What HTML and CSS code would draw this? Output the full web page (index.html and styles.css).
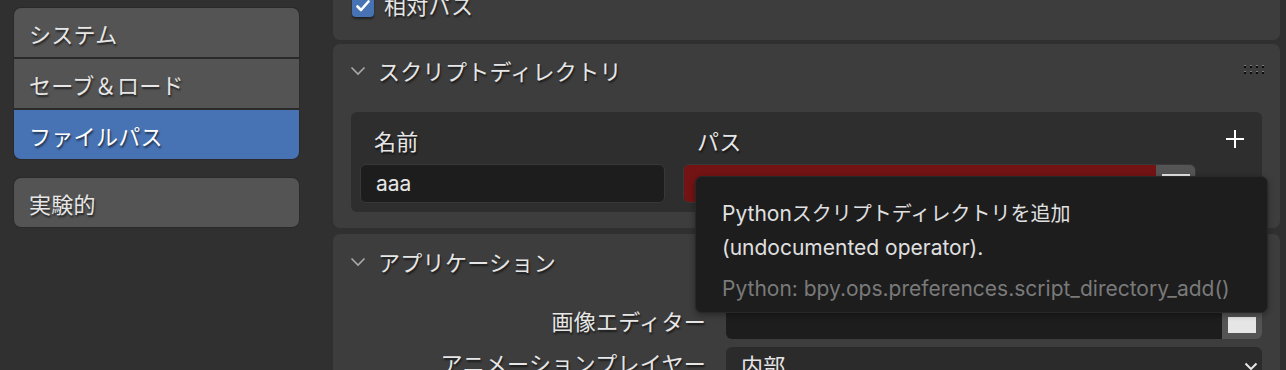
FILE: index.html
```html
<!DOCTYPE html>
<html lang="ja">
<head>
  <meta charset="UTF-8" />
  <title>プリファレンス - ファイルパス</title>
  <link rel="stylesheet" href="styles.css">
</head>
<body>
  <div class="app">
    <aside class="sidebar">
      <div class="tabs">
        <div class="tab">システム</div>
        <div class="tab">セーブ＆ロード</div>
        <div class="tab active">ファイルパス</div>
      </div>
      <div class="tabs">
        <div class="tab">実験的</div>
      </div>
    </aside>

    <main class="content">
      <section class="panel panel-top">
        <label class="check-row">
          <span class="checkbox">
            <svg width="14" height="12" viewBox="0 0 14 12"><path d="M1.5 6.5 L5 10 L12.5 1.5" fill="none" stroke="#fff" stroke-width="2.6" stroke-linecap="round" stroke-linejoin="round"/></svg>
          </span>
          <span class="jp">相対パス</span>
        </label>
      </section>

      <section class="panel panel-scripts">
        <div class="panel-header">
          <svg class="chevron" width="16" height="10" viewBox="0 0 16 10"><path d="M1.5 1.5 L8 8 L14.5 1.5" fill="none" stroke="#aaa" stroke-width="1.6"/></svg>
          <span class="jp">スクリプトディレクトリ</span>
          <svg class="grip" width="22" height="10" viewBox="0 0 22 10">
            <g fill="#7a7a7a"><rect x="0" y="0" width="2" height="1"/><rect x="6" y="0" width="2" height="1"/><rect x="12" y="0" width="2" height="1"/><rect x="18" y="0" width="2" height="1"/><rect x="0" y="6" width="2" height="1"/><rect x="6" y="6" width="2" height="1"/><rect x="12" y="6" width="2" height="1"/><rect x="18" y="6" width="2" height="1"/></g>
            <g fill="#0c0c0c"><rect x="0" y="1" width="2" height="2"/><rect x="6" y="1" width="2" height="2"/><rect x="12" y="1" width="2" height="2"/><rect x="18" y="1" width="2" height="2"/><rect x="0" y="7" width="2" height="2"/><rect x="6" y="7" width="2" height="2"/><rect x="12" y="7" width="2" height="2"/><rect x="18" y="7" width="2" height="2"/></g>
          </svg>
        </div>
        <div class="listbox">
          <div class="col-label jp">名前</div>
          <div class="col-label jp">パス</div>
          <div class="add">
            <svg width="18" height="18" viewBox="0 0 18 18"><path d="M9 0 V18 M0 9 H18" stroke="#fff" stroke-width="2"/></svg>
          </div>
          <div class="field">aaa</div>
          <div class="path-field">
            <div class="path-value"></div>
            <div class="browse"><span class="browse-icon"></span></div>
          </div>
          <div></div>
        </div>
      </section>

      <section class="panel panel-apps">
        <div class="panel-header">
          <svg class="chevron" width="16" height="10" viewBox="0 0 16 10"><path d="M1.5 1.5 L8 8 L14.5 1.5" fill="none" stroke="#aaa" stroke-width="1.6"/></svg>
          <span class="jp">アプリケーション</span>
          <svg class="grip" width="22" height="10" viewBox="0 0 22 10">
            <g fill="#0c0c0c"><rect x="0" y="1" width="2" height="2"/><rect x="6" y="1" width="2" height="2"/><rect x="12" y="1" width="2" height="2"/><rect x="18" y="1" width="2" height="2"/><rect x="0" y="7" width="2" height="2"/><rect x="6" y="7" width="2" height="2"/><rect x="12" y="7" width="2" height="2"/><rect x="18" y="7" width="2" height="2"/></g>
          </svg>
        </div>
        <div class="prop-rows">
          <div class="prop-label jp">画像エディター</div>
          <div class="path-field small">
            <div class="path-value dark"></div>
            <div class="browse"><span class="browse-icon"></span></div>
          </div>
          <div class="prop-label jp">アニメーションプレイヤー</div>
          <div class="dropdown">
            <span class="jp">内部</span>
            <svg width="14" height="9" viewBox="0 0 14 9"><path d="M1.5 1.5 L7 7 L12.5 1.5" fill="none" stroke="#e6e6e6" stroke-width="2"/></svg>
          </div>
        </div>
      </section>
    </main>

    <div class="tooltip">
      <div class="tip-line">Python<span class="tip-jp">スクリプトディレクトリを追加</span></div>
      <div class="tip-line">(undocumented operator).</div>
      <div class="tip-python">Python: bpy.ops.preferences.script_directory_add()</div>
    </div>
  </div>
</body>
</html>
```

FILE: styles.css
```css
* {
  margin: 0;
  padding: 0;
  box-sizing: border-box;
}

html, body {
  width: 1286px;
  height: 370px;
  overflow: hidden;
  background: #303030;
  font-family: 'Inter', 'Noto Sans CJK JP', sans-serif;
  font-size: 21px;
  color: #e6e6e6;
}

.jp {
  font-size: 22px;
  letter-spacing: 0.3px;
}

.app {
  position: relative;
  display: flex;
  height: 370px;
  overflow: hidden;
}

/* sidebar */

.sidebar {
  width: 300px;
  flex-shrink: 0;
  padding: 7px 0 0 13px;
  display: flex;
  flex-direction: column;
  gap: 17px;
}

.tabs {
  background: #2a2a2a;
  border-radius: 8px;
  padding: 1px;
  display: flex;
  flex-direction: column;
  gap: 2px;
  overflow: hidden;
}

.tab {
  height: 49px;
  flex-shrink: 0;
  background: #545454;
  display: flex;
  align-items: center;
  padding-left: 15px;
  font-size: 22px;
  letter-spacing: 0.3px;
  text-shadow: 1px 2px 2px rgba(0, 0, 0, 0.6);
}

.tab:first-child {
  border-radius: 7px 7px 0 0;
}

.tab:last-child {
  border-radius: 0 0 7px 7px;
}

.tab:only-child {
  border-radius: 7px;
}

.tab.active {
  background: #4772b3;
  color: #fff;
}

/* main panels */

.content {
  margin-left: 33px;
  width: 947px;
  margin-top: -12px;
  height: 382px;
  display: flex;
  flex-direction: column;
}

.panel {
  flex-shrink: 0;
  background: #3d3d3d;
  border-radius: 7px;
}

.panel-top {
  height: 52px;
  padding: 7px 0 0 19px;
}

.check-row {
  display: flex;
  align-items: center;
  gap: 10px;
  height: 22px;
  text-shadow: 1px 2px 2px rgba(0, 0, 0, 0.6);
}

.check-row .jp {
  margin-top: -4px;
}

.checkbox {
  width: 22px;
  height: 22px;
  border-radius: 4px;
  background: #4772b3;
  display: flex;
  align-items: center;
  justify-content: center;
  box-shadow: 0 2px 2px rgba(0, 0, 0, 0.45);
}

.panel-scripts {
  margin-top: 4px;
  height: 184px;
}

.panel-apps {
  margin-top: 6px;
  flex: 1 1 auto;
  min-height: 0;
  overflow: hidden;
  border-radius: 7px 7px 0 0;
}

.panel-header {
  height: 52px;
  display: flex;
  align-items: center;
  padding: 0 14px 0 17px;
  text-shadow: 1px 2px 2px rgba(0, 0, 0, 0.6);
}

.panel-apps .panel-header {
  height: 54px;
}

.chevron {
  margin-right: 12px;
  margin-top: 1px;
}

.grip {
  margin-left: auto;
}

/* list of script directories */

.listbox {
  margin: 16px 18px 0;
  height: 100px;
  background: #2e2e2e;
  border-radius: 6px;
  padding: 18px 0 0 9px;
  display: grid;
  grid-template-columns: 305px 513px 1fr;
  grid-template-rows: 24px 39px;
  column-gap: 18px;
  row-gap: 10px;
}

.col-label {
  padding-left: 14px;
  line-height: 24px;
  text-shadow: 1px 2px 2px rgba(0, 0, 0, 0.6);
}

.add {
  display: flex;
  align-items: center;
  padding-left: 12px;
  margin-top: -6px;
}

.field {
  background: #1d1d1d;
  border: 1px solid #383838;
  border-radius: 6px;
  padding-left: 15px;
  display: flex;
  align-items: center;
}

.path-field {
  display: flex;
  border: 1px solid #383838;
  border-radius: 6px;
  overflow: hidden;
}

.path-value {
  flex: 1;
  background: #741314;
}

.path-value.dark {
  background: #1d1d1d;
}

.browse {
  width: 39px;
  background: #545454;
  display: flex;
  justify-content: center;
  padding-top: 9px;
}

.browse-icon {
  width: 28px;
  height: 16px;
  background: #e6e6e6;
}

/* application rows */

.prop-rows {
  margin-top: 17px;
  padding-right: 18px;
  display: grid;
  grid-template-columns: 373px 1fr;
  grid-auto-rows: 34px;
  column-gap: 20px;
  row-gap: 8px;
}

.prop-label {
  text-align: right;
  line-height: 34px;
  white-space: nowrap;
  text-shadow: 1px 2px 2px rgba(0, 0, 0, 0.6);
}

.path-field.small {
  border: none;
}

.path-field.small .browse {
  width: 40px;
  padding-top: 12px;
}

.dropdown {
  background: #2b2b2b;
  border-radius: 6px;
  display: flex;
  align-items: center;
  justify-content: space-between;
  padding: 0 4px 0 15px;
}

.dropdown svg {
  margin-top: 4px;
}

/* tooltip */

.tooltip {
  position: absolute;
  left: 695px;
  top: 176px;
  width: 573px;
  height: 137px;
  background: #1d1d1d;
  border: 1px solid #282828;
  border-radius: 7px;
  padding: 20px 0 0 26px;
  box-shadow: 0 2px 6px rgba(0, 0, 0, 0.35);
  font-size: 21px;
}

.tip-line {
  line-height: 33px;
  color: #e0e0e0;
}

.tip-jp {
  font-size: 20px;
}

.tip-python {
  margin-top: 8px;
  line-height: 33px;
  color: #7a7a7a;
}
```
